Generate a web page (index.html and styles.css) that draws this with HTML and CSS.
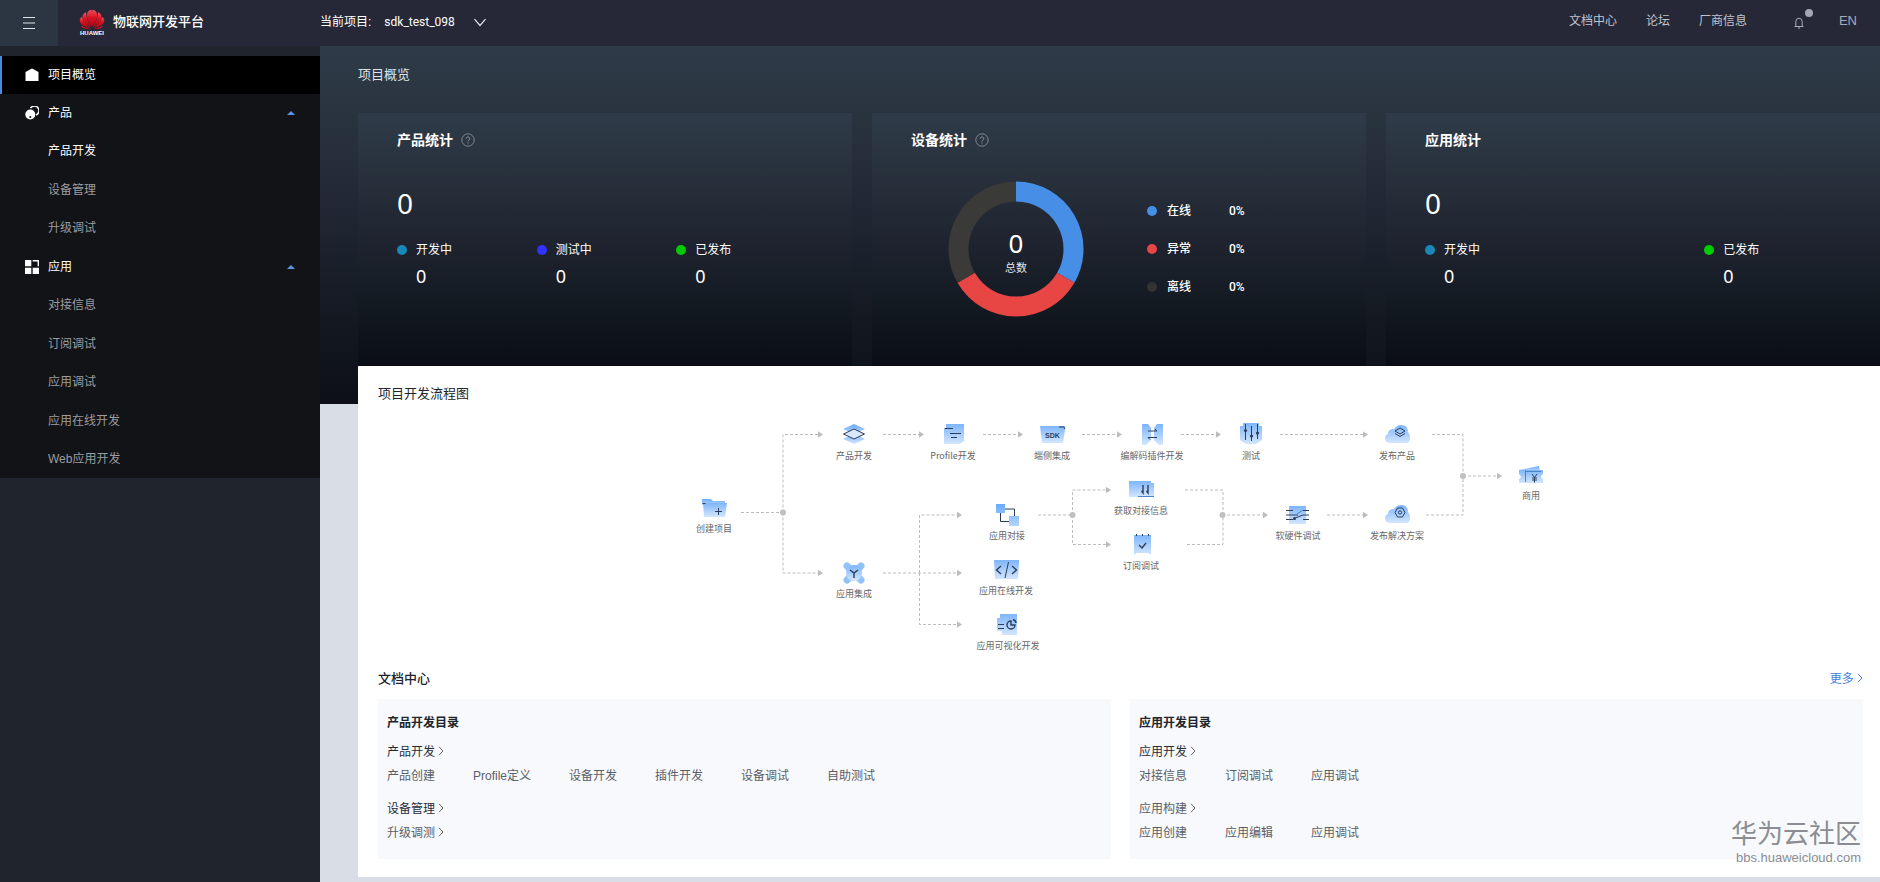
FILE: index.html
```html
<!DOCTYPE html>
<html lang="zh-CN">
<head>
<meta charset="utf-8">
<title>物联网开发平台</title>
<link rel="stylesheet" href="styles.css">
</head>
<body>
<header class="topbar">
  <button class="menu-btn" type="button" aria-label="菜单">
    <svg width="12" height="14" viewBox="0 0 12 14"><path d="M0 1.500h12M0 7h12M0 12.500h12" stroke="#dfe3e8" stroke-width="1.200"/></svg>
  </button>
  <div class="brand">
    <svg class="logo" width="26" height="26" viewBox="0 0 26 26" aria-hidden="true">
      <defs><linearGradient id="petal" x1="0" y1="0" x2="0" y2="1"><stop offset="0" stop-color="#f0525c"/><stop offset=".45" stop-color="#d91222"/><stop offset="1" stop-color="#b00615"/></linearGradient></defs>
      <g fill="url(#petal)">
        <path d="M12.700 18C9.500 13.500 7.300 9 7.900 5.300 8.400 2.300 10.500.8 12.500.8c.9 4 .9 10.500.2 17.200z"/>
        <path d="M13.300 18C16.500 13.500 18.700 9 18.100 5.300 17.600 2.300 15.500.8 13.500.8c-.9 4-.9 10.500-.2 17.200z"/>
        <path d="M12 18.300C6.500 14.800 3.600 11 3.500 7.800c0-2.300 1.200-4 3.500-4.600C7 8.500 9.300 13.500 12 18.300z"/>
        <path d="M14 18.300C19.500 14.800 22.400 11 22.500 7.800c0-2.300-1.200-4-3.500-4.600C19 8.500 16.700 13.500 14 18.300z"/>
        <path d="M11.500 18.900C5.500 18.300 1.300 15.500.8 12.300.5 10.300 1.300 8.800 2.800 8c1.700 4.500 5 8 8.700 10.900z"/>
        <path d="M14.500 18.900C20.500 18.300 24.700 15.500 25.200 12.300c.3-2-.5-3.500-2-4.300-1.700 4.500-5 8-8.700 10.900z"/>
        <path d="M11 19.500c-4.200 1-7.500.2-8.900-2.500 2.900 1.300 5.600 2 8.900 2.500z"/>
        <path d="M15 19.500c4.200 1 7.500.2 8.900-2.500-2.900 1.300-5.600 2-8.900 2.500z"/>
      </g>
      <text class="logo-text" x="13" y="26" text-anchor="middle">HUAWEI</text>
    </svg>
    <span class="brand-name">物联网开发平台</span>
  </div>
  <div class="project">
    <label for="project">当前项目:</label>
    <select id="project"><option>sdk_test_098</option></select>
    <svg width="12" height="9" viewBox="0 0 12 9"><path d="M.5 1.200 6 7.500l5.500-6.300" fill="none" stroke="#e4e6ea" stroke-width="1.200"/></svg>
  </div>
  <nav class="topnav">
    <a href="#">文档中心</a>
    <a href="#">论坛</a>
    <a href="#">厂商信息</a>
    <button class="bell" type="button" aria-label="通知">
      <svg width="10" height="12" viewBox="0 0 10 12"><path d="M1.800 9V4.800a3.200 3.600 0 0 1 6.400 0V9M.5 9.500h9M4 11h2" fill="none" stroke="#a9abb6"/></svg>
      <i class="bell-dot"></i>
    </button>
    <a class="lang" href="#">EN</a>
  </nav>
</header>
<div class="shell">
  <aside class="sidebar">
    <nav class="menu">
      <a class="item active" href="#">
        <svg width="14" height="14" viewBox="0 0 14 14"><path d="M.5 13V4.500Q.5 4 1 3.700L6 .9q1-.6 2 0l5 2.800q.5.3.5.8V13z" fill="#fff"/></svg>
        项目概览</a>
      <div class="group products">
        <button class="item" type="button">
          <svg width="14" height="14" viewBox="0 0 14 14"><circle cx="5.300" cy="8.500" r="5" fill="#fff"/><path d="M5.500 2.200A4.600 4.600 0 1 1 11 9" fill="none" stroke="#fff" stroke-width="1.500"/><path d="M4.300 11h2M5.300 10v2" stroke="#121317"/></svg>
          产品<i class="caret"></i></button>
        <a class="item sub bright" href="#">产品开发</a>
        <a class="item sub" href="#">设备管理</a>
        <a class="item sub" href="#">升级调试</a>
      </div>
      <div class="group">
        <button class="item" type="button">
          <svg width="14" height="14" viewBox="0 0 14 14"><path d="M0 0h6.300v6.300H0zM0 7.700h6.300V14H0zM7.700 7.700H14V14H7.700z" fill="#fff"/><path d="M7.700.7h5.600v5.600" fill="none" stroke="#fff" stroke-width="1.400"/></svg>
          应用<i class="caret"></i></button>
        <a class="item sub" href="#">对接信息</a>
        <a class="item sub" href="#">订阅调试</a>
        <a class="item sub" href="#">应用调试</a>
        <a class="item sub" href="#">应用在线开发</a>
        <a class="item sub" href="#">Web应用开发</a>
      </div>
    </nav>
  </aside>
  <main class="main">
    <h1 class="page-title">项目概览</h1>
    <div class="cards">
      <section class="card">
        <h2>产品统计 <svg class="help" width="14" height="14" viewBox="0 0 14 14"><circle cx="7" cy="7" r="6.200" fill="none" stroke="#7f8790"/><path d="M5.200 5.600a1.800 1.700 0 1 1 2.700 1.500Q7 7.600 7 8.500M7 9.600v1" fill="none" stroke="#8d949c"/></svg></h2>
        <div class="total">0</div>
        <div class="stats">
          <div class="stat"><i class="dot teal"></i><span>开发中</span><b>0</b></div>
          <div class="stat"><i class="dot indigo"></i><span>测试中</span><b>0</b></div>
          <div class="stat"><i class="dot green"></i><span>已发布</span><b>0</b></div>
        </div>
      </section>
      <section class="card">
        <h2>设备统计 <svg class="help" width="14" height="14" viewBox="0 0 14 14"><circle cx="7" cy="7" r="6.200" fill="none" stroke="#7f8790"/><path d="M5.200 5.600a1.800 1.700 0 1 1 2.700 1.500Q7 7.600 7 8.500M7 9.600v1" fill="none" stroke="#8d949c"/></svg></h2>
        <div class="devices">
          <svg width="136" height="136" viewBox="-68 -68 136 136">
            <g fill="none" stroke-width="20">
              <path d="M0-57.500A57.500 57.500 0 0 1 49.800 28.750" stroke="#478fe6"/>
              <path d="M49.800 28.750A57.500 57.500 0 0 1-49.800 28.750" stroke="#e84545"/>
              <path d="M-49.800 28.750A57.500 57.500 0 0 1 0-57.500" stroke="#3a3a39"/>
            </g>
            <text class="donut-num" x="0" y="4" text-anchor="middle">0</text>
            <text class="donut-label" x="0" y="23" text-anchor="middle">总数</text>
          </svg>
          <ul class="legend">
            <li><i class="dot blue"></i><span>在线</span><b>0%</b></li>
            <li><i class="dot red"></i><span>异常</span><b>0%</b></li>
            <li><i class="dot gray"></i><span>离线</span><b>0%</b></li>
          </ul>
        </div>
      </section>
      <section class="card">
        <h2>应用统计</h2>
        <div class="total">0</div>
        <div class="stats wide">
          <div class="stat"><i class="dot teal"></i><span>开发中</span><b>0</b></div>
          <div class="stat"><i class="dot green"></i><span>已发布</span><b>0</b></div>
        </div>
      </section>
    </div>
    <section class="panel">
      <h2 class="panel-title flow-title">项目开发流程图</h2>
      <svg class="flow" width="860" height="244" viewBox="691 415 860 244">
        <defs>
          <linearGradient id="g" x1="0" y1="0" x2="0" y2="1"><stop offset="0" stop-color="#7db5fa"/><stop offset="1" stop-color="#d3e6fe"/></linearGradient>
          <linearGradient id="gs" x1="0" y1="0" x2="0" y2="1"><stop offset="0" stop-color="#6aabfa"/><stop offset="1" stop-color="#b4d5fd"/></linearGradient>
          <marker id="a" markerUnits="userSpaceOnUse" markerWidth="6" markerHeight="8" refX="4" refY="4" orient="auto"><path class="tip" d="M0 .8 5 4 0 7.200z"/></marker>
        </defs>
        <g class="wires">
          <path d="M741 512.500h42"/>
          <path d="M783 512.500V434.500H822" marker-end="url(#a)"/>
          <path d="M783 512.500V573H822" marker-end="url(#a)"/>
          <path d="M883 434.500h40" marker-end="url(#a)"/>
          <path d="M983 434.500h39" marker-end="url(#a)"/>
          <path d="M1082 434.500h39" marker-end="url(#a)"/>
          <path d="M1181 434.500h39" marker-end="url(#a)"/>
          <path d="M1280 434.500h87" marker-end="url(#a)"/>
          <path d="M883 573h78" marker-end="url(#a)"/>
          <path d="M919.500 573V515H961" marker-end="url(#a)"/>
          <path d="M919.500 573V624.500H961" marker-end="url(#a)"/>
          <path d="M1038 515h34"/>
          <path d="M1072.500 515V490H1110" marker-end="url(#a)"/>
          <path d="M1072.500 515V544.500H1110" marker-end="url(#a)"/>
          <path d="M1185 490h38V515"/>
          <path d="M1187 544.500h36V515"/>
          <path d="M1227 515h40" marker-end="url(#a)"/>
          <path d="M1327 515h40" marker-end="url(#a)"/>
          <path d="M1432 434.500h31V476"/>
          <path d="M1426 515h37V476"/>
          <path d="M1468 476h33" marker-end="url(#a)"/>
        </g>
        <g fill="#c0c0c0"><circle cx="783" cy="512.500" r="3"/><circle cx="1072.500" cy="515" r="3"/><circle cx="1222.500" cy="515" r="3"/><circle cx="1463" cy="476" r="3"/></g>

        <!-- node icons: .f filled shapes, .l outlines -->
        <g>
          <path fill="url(#gs)" d="M702 499h9l2 2h12v4h-23z"/><path fill="url(#g)" d="M703 503h24l-2 14h-21z"/><path class="l" d="M702.500 503.500h3M715 511.500h7M718.500 508v7"/>
        </g>
        <g>
          <path fill="url(#gs)" d="m854 424 11 5-11 5-11-5z"/><path fill="url(#g)" d="m854 434 11 5-11 5-11-5z"/><path class="l pale" d="m854 429 10.500 5-10.500 5-10.500-5z"/>
        </g>
        <g>
          <path fill="url(#g)" d="M946 424h18v17l-4 3h-16v-16h2z"/><path class="l" d="M945 428.500h8M950 433.500h11M951 437.500h6"/>
        </g>
        <g>
          <path fill="url(#g)" d="M1040 426h25v4l-2 13h-21z"/><path class="l" d="M1059 427h5l1 2"/>
          <text class="sdk" x="1052.500" y="438" text-anchor="middle">SDK</text>
        </g>
        <g>
          <path fill="url(#g)" d="M1142 424h6l3 4v12l-5 5h-4zM1163 424h-6l-3 4v12l5 5h4z"/><path class="l" d="M1148 431h9l-2-2M1157 437.500h-9l2 2"/>
        </g>
        <g>
          <path fill="url(#g)" d="M1243 423h16v3h3v14l-6 4h-10l-6-4v-14h3z"/><path class="l" d="M1245.500 424v16M1251.500 426v15M1257.500 424v15"/>
          <g class="f"><circle cx="1245.500" cy="430.500" r="1.600"/><circle cx="1251.500" cy="436" r="1.600"/><circle cx="1257.500" cy="433" r="1.600"/></g>
        </g>
        <g>
          <path fill="url(#g)" d="M1389 443q-4-1-4-5 0-3 3-4 0-5 6-5 3-4 7-4 7 0 7 7 2 2 2 6 0 5-4 5z"/><path class="l" d="m1400 428 5 3-5 3-5-3zM1395 433.500l5 3 5-3"/>
        </g>
        <g>
          <path fill="url(#g)" d="M1389 523q-4-1-4-5 0-3 3-4 0-5 6-5 3-4 7-4 7 0 7 7 2 2 2 6 0 5-4 5z"/><path class="l" d="M1397.500 508h5l2.500 4.500-2.500 4.500h-5l-2.500-4.500z"/><circle class="l" cx="1400" cy="512.500" r="1.600"/>
        </g>
        <g>
          <path fill="url(#gs)" d="M1519 470l20-4 1 5z"/><path fill="url(#g)" d="M1519 470h24v4q-2 1-2 3t2 2v4h-24v-4q2-1 2-2t-2-3z"/><path class="l mid" d="M1525.500 470v12M1526 471.500h15"/><path class="l" d="m1532 474 2.500 3.500 2.500-3.500M1534.500 477.500v5M1532 478h5M1532 480h5"/>
        </g>
        <g>
          <path class="l" d="M1005 509h9.500v8M1000.500 512v9.500h9"/><path fill="url(#gs)" d="M996 504h9v9h-9zM1009 516h10v10h-10z"/>
        </g>
        <g>
          <path class="arms" d="m847 566 14 14M861 566l-14 14"/><circle cx="854" cy="573" r="8" fill="url(#g)"/><path class="l bold" d="m850 570 4 3 4-3M854 573v5"/>
        </g>
        <g>
          <path fill="url(#g)" d="M994 560h25v3l-1 16h-23z"/><path class="l bold" d="m1001 566-4.500 4 4.500 4M1012 566l4.500 4-4.500 4"/><path class="l" d="m1008.500 562-3.500 16"/>
        </g>
        <g>
          <path fill="url(#g)" d="M1000 614h17v21h-15v-4h-5v-13h3z"/><path class="l" d="M998 624.500h6M998 628.500h6"/><path class="l bold" d="M1011 621a4 4 0 1 0 4 4h-4zM1013 619.500q3 1 3 3.500"/>
        </g>
        <g>
          <path fill="url(#g)" d="M1129 481h22v2h3v14h-25z"/><path class="l bold" d="M1143 485v8l-1.500-2M1148 485v8l-1.500-2"/><path class="l mid" d="M1138 496.500h16"/>
        </g>
        <g>
          <path fill="url(#g)" d="M1134 535h17v20l-3-2h-11l-3 2z"/><path class="l" d="M1136.500 534v2M1142.500 534v2M1148.500 534v2"/><path class="l bold" d="m1139 545 3 3 4-5"/>
        </g>
        <g>
          <path fill="url(#g)" d="M1289 506h17v18h-17z"/><path class="l" d="M1286 510.500h7M1303 510.500h6M1286 515h12M1286 519.500h7M1303 519.500h6M1294 518.500l9-3.500h6"/><path class="l mid" d="m1297 514 6-4"/><circle class="f" cx="1294.500" cy="518.500" r="1.500"/>
        </g>
        <g class="labels" text-anchor="middle">
          <text x="714" y="532">创建项目</text>
          <text x="854" y="459">产品开发</text>
          <text x="953" y="459">Profile开发</text>
          <text x="1052" y="459">端侧集成</text>
          <text x="1152" y="459">编解码插件开发</text>
          <text x="1251" y="459">测试</text>
          <text x="1397" y="459">发布产品</text>
          <text x="1531" y="499">商用</text>
          <text x="854" y="597">应用集成</text>
          <text x="1007" y="539">应用对接</text>
          <text x="1006" y="594">应用在线开发</text>
          <text x="1008" y="649">应用可视化开发</text>
          <text x="1141" y="514">获取对接信息</text>
          <text x="1141" y="569">订阅调试</text>
          <text x="1298" y="539">软硬件调试</text>
          <text x="1397" y="539">发布解决方案</text>
        </g>
      </svg>
      <div class="docs-head">
        <h2 class="panel-title">文档中心</h2>
        <a class="more" href="#">更多 <svg width="6" height="10" viewBox="0 0 6 10"><path d="m1 .8 4 4.200-4 4.200" fill="none" stroke="#3f82d8"/></svg></a>
      </div>
      <div class="docs">
        <section class="doc">
          <h3>产品开发目录</h3>
          <a class="topic" href="#">产品开发 <svg width="6" height="10" viewBox="0 0 6 10"><path d="m1 .8 4 4.200-4 4.200" fill="none" stroke="#666"/></svg></a>
          <div class="links"><a href="#">产品创建</a><a href="#">Profile定义</a><a href="#">设备开发</a><a href="#">插件开发</a><a href="#">设备调试</a><a href="#">自助测试</a></div>
          <a class="topic" href="#">设备管理 <svg width="6" height="10" viewBox="0 0 6 10"><path d="m1 .8 4 4.200-4 4.200" fill="none" stroke="#666"/></svg></a>
          <div class="links"><a href="#">升级调测 <svg width="6" height="10" viewBox="0 0 6 10"><path d="m1 .8 4 4.200-4 4.200" fill="none" stroke="#666"/></svg></a></div>
        </section>
        <section class="doc">
          <h3>应用开发目录</h3>
          <a class="topic" href="#">应用开发 <svg width="6" height="10" viewBox="0 0 6 10"><path d="m1 .8 4 4.200-4 4.200" fill="none" stroke="#666"/></svg></a>
          <div class="links"><a href="#">对接信息</a><a href="#">订阅调试</a><a href="#">应用调试</a></div>
          <a class="topic soft" href="#">应用构建 <svg width="6" height="10" viewBox="0 0 6 10"><path d="m1 .8 4 4.200-4 4.200" fill="none" stroke="#666"/></svg></a>
          <div class="links"><a href="#">应用创建</a><a href="#">应用编辑</a><a href="#">应用调试</a></div>
        </section>
      </div>
    </section>
    <div class="watermark"><span>华为云社区</span><small>bbs.huaweicloud.com</small></div>
  </main>
</div>
</body>
</html>
```
FILE: styles.css
```css
* { box-sizing: border-box; }
body {
  margin: 0;
  min-height: 100vh;
  display: flex;
  flex-direction: column;
  background: #d9dde5;
  font: 12px/20px "Liberation Sans", "Noto Sans CJK SC", sans-serif;
  color: #252b3a;
}
a { color: inherit; text-decoration: none; }
h1, h2, h3, ul { margin: 0; padding: 0; }
button, select { font: inherit; color: inherit; background: none; border: 0; padding: 0; }

.topbar { display: flex; align-items: center; height: 46px; background: #262838; color: #fff; }
.menu-btn { width: 58px; height: 46px; display: flex; align-items: center; justify-content: center; background: #2b3642; }
.brand { width: 262px; display: flex; align-items: center; gap: 8px; padding-left: 21px; padding-bottom: 2px; }
.logo-text { font: bold 6px "Liberation Sans", sans-serif; fill: #fff; }
.brand-name { font-size: 13px; font-weight: 500; }
.project { display: flex; align-items: center; gap: 13px; padding-bottom: 2px; }
.project select { appearance: none; width: 77px; font-family: Roboto, sans-serif; outline: 0; }
.topnav { margin-left: auto; display: flex; align-items: center; gap: 29px; padding: 0 23px 4px 0; color: #c1c3cb; }
.bell { position: relative; display: flex; margin: 4px 6px 0 18px; }
.bell-dot { position: absolute; left: 11px; top: -8px; width: 8px; height: 8px; border-radius: 50%; background: #a3a5b2; }
.lang { font-size: 13px; color: #a9abb8; }

.shell { flex: 1; display: flex; }
.sidebar { width: 320px; flex: none; background: #1f242d; padding-top: 10px; }
.menu { background: #121317; }
.products { padding-bottom: 1px; }
.item {
  display: flex; align-items: center; gap: 9px; width: 100%; height: 38px;
  padding: 0 25px; color: #fff; text-align: left;
}
.item.active { background: #000; border-left: 2px solid #4a8be0; padding-left: 23px; }
.item.sub { padding-left: 48px; color: #9b9ca0; }
.item.sub:nth-child(odd) { height: 39px; }
.item.sub.bright { color: #fff; }
.caret { margin-left: auto; border: 4px solid transparent; border-top: 0; border-bottom-color: #5a95e4; }

.main {
  position: relative; flex: 1; min-width: 0; padding: 17px 0 3px 38px;
  background: linear-gradient(#303b4a, #29343f 18%, #232a37 40%, #161b25 70%, #0c0f16) no-repeat 0 0 / 100% 358px;
}
.page-title { font-size: 13px; font-weight: 400; line-height: 24px; color: #dfe3e8; }
.cards { display: flex; gap: 20px; margin-top: 26px; }
.card {
  flex: 1; min-width: 0; height: 253px; padding: 17px 36px 0 39px; color: #fff;
  background: linear-gradient(#2f3b49, #28323d 22%, #1f2430 50%, #141a22 75%, #0a0d16);
}
.card h2 { display: flex; align-items: center; gap: 8px; font-size: 14px; line-height: 20px; font-weight: 700; }
.total { margin-top: 33px; font: 28px/40px "Noto Sans", sans-serif; }
.stats { display: flex; margin-top: 16px; }
.stat { flex: 1; display: grid; grid-template-columns: 10px auto; column-gap: 9px; align-items: center; justify-content: start; line-height: 22px; }
.stat b { grid-column: 2; font: 18px/30px "Noto Sans", sans-serif; }
.stats.wide .stat:first-child { flex: 2; }
.dot { width: 10px; height: 10px; border-radius: 50%; }
.teal { background: #1788b8; }
.indigo { background: #3333ff; }
.green { background: #00cc00; }
.blue { background: #478fe6; }
.red { background: #e84545; }
.gray { background: #333; }
.devices { display: flex; align-items: center; gap: 63px; margin-top: 31px; padding-left: 37px; }
.donut-num { font: 26px "Noto Sans", sans-serif; fill: #fff; }
.donut-label { font: 11px "Noto Sans CJK SC", sans-serif; fill: #e6e6e6; }
.legend { list-style: none; display: grid; gap: 18px; }
.legend li { display: flex; align-items: center; }
.legend span { margin: 0 38px 0 10px; font-weight: 500; }
.legend b { font: 500 12px/20px Roboto, sans-serif; }

.panel { background: #fff; padding: 17px 17px 18px 20px; }
.panel-title { font-size: 13px; line-height: 22px; font-weight: 500; color: #20242c; }
.flow-title { font-weight: 400; }
.flow { display: block; margin: 10px auto 0; max-width: 100%; }
.wires path { fill: none; stroke: #bcbcbc; stroke-dasharray: 3 2; }
.wires path:not([marker-end]) { stroke-dashoffset: 0; }
.tip { fill: #bcbcbc; }
.l { fill: none; stroke: #2c3e5a; }
.l.bold { stroke-width: 1.4; }
.l.mid { stroke: #4d83c8; }
.l.pale { fill: #d9e9fd; }
.f { fill: #2c3e5a; }
.arms { stroke: #93c1fa; stroke-width: 7; stroke-linecap: round; }
.labels { font: 9px "Noto Sans CJK SC", sans-serif; fill: #666; }
.sdk { font: bold 7px "Liberation Sans", sans-serif; fill: #2c3e5a; }
.docs-head { display: flex; justify-content: space-between; align-items: center; margin-top: 9px; }
.more { color: #3f82d8; }
.docs { display: grid; grid-template-columns: 1fr 1fr; gap: 19px; margin-top: 9px; }
.doc { background: #f8f9fd; padding: 14px 9px 16px; }
.doc h3 { font-size: 12px; line-height: 20px; font-weight: 700; color: #20242c; }
.topic { display: block; margin-top: 15px; line-height: 16px; color: #252b3a; }
.doc h3 + .topic { margin-top: 11px; }
.topic.soft { color: #5a5e66; }
.links { display: flex; flex-wrap: wrap; gap: 38px; line-height: 20px; margin-top: 6px; color: #5a5e66; }
.watermark { position: absolute; right: 19px; bottom: 16px; display: grid; justify-items: end; color: #8b8d92; }
.watermark span { font-size: 26px; line-height: 32px; }
.watermark small { font-size: 13px; line-height: 16px; }
```
